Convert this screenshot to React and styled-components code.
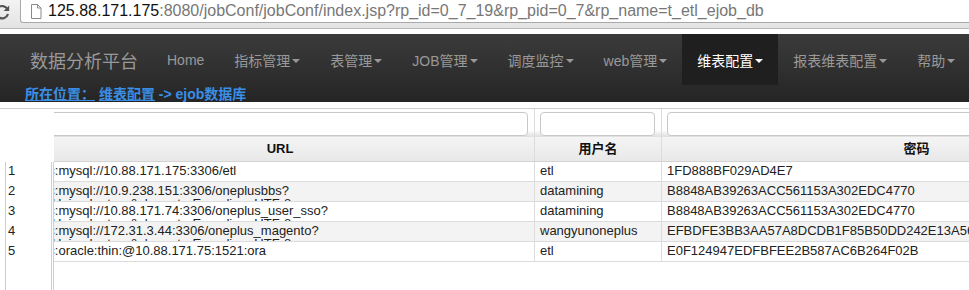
import styled, { createGlobalStyle } from "styled-components";

const GlobalStyle = createGlobalStyle`
  html, body { margin: 0; padding: 0; background: #fff; }
  body {
    font-family: "Liberation Sans", "Noto Sans CJK SC", Arial, sans-serif;
    overflow: hidden;
  }
`;

const Page = styled.div`
  width: 969px;
  height: 290px;
  overflow: hidden;
`;

/* ---------- browser chrome ---------- */

const BrowserBar = styled.div`
  height: 28px;
  background: linear-gradient(#f3f3f3, #e3e3e3);
  border-bottom: 1px solid #b9b9b9;
  display: flex;
  align-items: flex-start;
`;

const ReloadBox = styled.div`
  width: 20px;
  height: 24px;
  flex-shrink: 0;
  display: flex;
  align-items: center;
  overflow: hidden;
  svg { margin-left: -7px; }
`;

const AddressField = styled.div`
  flex: 1;
  height: 23px;
  box-sizing: border-box;
  background: #fff;
  border: 1px solid #a9a9a9;
  border-top: none;
  border-right: none;
  border-radius: 0 0 0 3px;
  display: flex;
  align-items: center;
  gap: 6px;
  padding-left: 9px;
  font-size: 16px;
  white-space: nowrap;
  overflow: hidden;
`;

const Host = styled.span`
  color: #111;
`;

const UrlRest = styled.span`
  color: #777;
`;

/* ---------- navbar ---------- */

const Navbar = styled.div`
  margin-top: 5px;
  height: 68px;
  background: linear-gradient(#3b3b3b, #252525);
  display: flex;
  flex-direction: column;
  overflow: hidden;
`;

const NavRow = styled.div`
  height: 51px;
  display: flex;
  align-items: stretch;
  padding-left: 30px;
`;

const Brand = styled.div`
  flex-shrink: 0;
  font-size: 18px;
  color: #999;
  display: flex;
  align-items: center;
  padding-right: 14px;
  white-space: nowrap;
`;

const NavItem = styled.div`
  flex-shrink: 0;
  display: flex;
  align-items: center;
  padding: 0 15px;
  font-size: 14px;
  color: ${(p) => (p.$active ? "#fff" : "#999")};
  background: ${(p) => (p.$active ? "#1f1f1f" : "transparent")};
  white-space: nowrap;
`;

const Caret = styled.span`
  display: inline-block;
  width: 0;
  height: 0;
  margin-left: 2px;
  margin-top: 2px;
  border-top: 4px solid ${(p) => (p.$active ? "#fff" : "#999")};
  border-left: 4px solid transparent;
  border-right: 4px solid transparent;
`;

const Breadcrumb = styled.div`
  height: 17px;
  padding: 1px 0 0 25px;
  box-sizing: border-box;
  font-size: 14px;
  font-weight: bold;
  line-height: 17px;
  color: #3a8ee6;
  white-space: nowrap;
`;

const CrumbLink = styled.span`
  text-decoration: underline;
`;

/* ---------- grid ---------- */

const COLS = [509, 127, 510];

const Grid = styled.div`
  margin-top: 6px;
  border-top: 1px solid #cfcfcf;
  height: 190px;
  display: flex;
`;

const LeftPane = styled.div`
  width: 52px;
  flex-shrink: 0;
  display: flex;
  flex-direction: column;
`;

const LeftSpacer = styled.div`
  height: 53px;
  flex-shrink: 0;
`;

const NumBody = styled.div`
  flex: 1;
  margin-left: 5px;
  border-left: 1px solid #cfcfcf;
  border-right: 1px solid #cfcfcf;
`;

const NumCell = styled.div`
  height: 20px;
  box-sizing: border-box;
  padding: 2px 0 0 2px;
  font-size: 13px;
  line-height: 13px;
  color: #222;
`;

const RightPane = styled.div`
  flex: 1;
  margin-left: 1px;
  display: flex;
  flex-direction: column;
  overflow: hidden;
`;

const Section = styled.div`
  overflow: hidden;
  border-left: 1px solid ${(p) => (p.$body ? "#cfcfcf" : "transparent")};
  flex: ${(p) => (p.$body ? 1 : "none")};
`;

const Track = styled.div`
  margin-left: -28px;
  width: ${COLS.reduce((a, b) => a + b, 0)}px;
`;

const FilterRow = styled.div`
  height: 28px;
  display: flex;
  background: linear-gradient(#fff 0%, #fff 75%, #dedede 100%);
`;

const FilterCell = styled.div`
  width: ${(p) => p.$w}px;
  box-sizing: border-box;
  border-right: 1px solid #dcdcdc;
  padding: 3px 6px 0 5px;
`;

const FilterInput = styled.div`
  height: 24px;
  box-sizing: border-box;
  border: 1px solid #c8c8c8;
  border-radius: 4px;
  background: #fff;
`;

const HeaderRow = styled.div`
  height: 25px;
  box-sizing: border-box;
  display: flex;
  background: linear-gradient(#f4f4f4, #e8e8e8);
  border-bottom: 1px solid #d3d3d3;
`;

const HeaderCell = styled.div`
  width: ${(p) => p.$w}px;
  box-sizing: border-box;
  border-right: 1px solid #dcdcdc;
  text-align: center;
  font-size: 13px;
  font-weight: bold;
  line-height: 24px;
  color: #111;
`;

const DataRow = styled.div`
  height: 20px;
  box-sizing: border-box;
  display: flex;
  border-bottom: 1px solid #dcdcdc;
  background: ${(p) => (p.$alt ? "#f3f3f3" : "#fff")};
`;

const DataCell = styled.div`
  width: ${(p) => p.$w}px;
  box-sizing: border-box;
  border-right: 1px solid #dcdcdc;
  padding: 2px 5px 0;
  font-size: 13px;
  line-height: 13px;
  color: #222;
  white-space: nowrap;
  overflow: hidden;
`;

const rows = [
  {
    url: ["jdbc:mysql://10.88.171.175:3306/etl"],
    user: "etl",
    pass: "1FD888BF029AD4E7",
  },
  {
    url: ["jdbc:mysql://10.9.238.151:3306/oneplusbbs?", "useUnicode=true&characterEncoding=UTF-8"],
    user: "datamining",
    pass: "B8848AB39263ACC561153A302EDC4770",
  },
  {
    url: ["jdbc:mysql://10.88.171.74:3306/oneplus_user_sso?", "useUnicode=true&characterEncoding=UTF-8"],
    user: "datamining",
    pass: "B8848AB39263ACC561153A302EDC4770",
  },
  {
    url: ["jdbc:mysql://172.31.3.44:3306/oneplus_magento?", "useUnicode=true&characterEncoding=UTF-8"],
    user: "wangyunoneplus",
    pass: "EFBDFE3BB3AA57A8DCDB1F85B50DD242E13A5607",
  },
  {
    url: ["jdbc:oracle:thin:@10.88.171.75:1521:ora"],
    user: "etl",
    pass: "E0F124947EDFBFEE2B587AC6B264F02B",
  },
];

const navItems = [
  { label: "Home" },
  { label: "指标管理", caret: true },
  { label: "表管理", caret: true },
  { label: "JOB管理", caret: true },
  { label: "调度监控", caret: true },
  { label: "web管理", caret: true },
  { label: "维表配置", caret: true, active: true },
  { label: "报表维表配置", caret: true },
  { label: "帮助", caret: true },
];

function ReloadIcon() {
  return (
    <svg width="18" height="18" viewBox="0 0 18 18">
      <path
        d="M14.5 6.2A6.2 6.2 0 1 0 15 11"
        fill="none"
        stroke="#555"
        strokeWidth="2.2"
      />
      <path d="M16.2 2.5v5.6h-5.6z" fill="#555" />
    </svg>
  );
}

function FileIcon() {
  return (
    <svg width="12" height="15" viewBox="0 0 12 15">
      <path
        d="M1.5 0.5h6l3.5 3.5v10.5h-9.5z"
        fill="#fff"
        stroke="#8a8a8a"
      />
      <path d="M7.5 0.5v3.5h3.5" fill="none" stroke="#8a8a8a" />
    </svg>
  );
}

export default function App() {
  return (
    <Page>
      <GlobalStyle />
      <BrowserBar>
        <ReloadBox>
          <ReloadIcon />
        </ReloadBox>
        <AddressField>
          <FileIcon />
          <span>
            <Host>125.88.171.175</Host>
            <UrlRest>:8080/jobConf/jobConf/index.jsp?rp_id=0_7_19&amp;rp_pid=0_7&amp;rp_name=t_etl_ejob_db</UrlRest>
          </span>
        </AddressField>
      </BrowserBar>

      <Navbar>
        <NavRow>
          <Brand>数据分析平台</Brand>
          {navItems.map((n) => (
            <NavItem key={n.label} $active={n.active}>
              {n.label}
              {n.caret && <Caret $active={n.active} />}
            </NavItem>
          ))}
        </NavRow>
        <Breadcrumb>
          <CrumbLink>所在位置：</CrumbLink> <CrumbLink>维表配置</CrumbLink> -&gt; ejob数据库
        </Breadcrumb>
      </Navbar>

      <Grid>
        <LeftPane>
          <LeftSpacer />
          <NumBody>
            {rows.map((r, i) => (
              <NumCell key={i}>{i + 1}</NumCell>
            ))}
          </NumBody>
        </LeftPane>
        <RightPane>
          <Section>
            <Track>
              <FilterRow>
                {COLS.map((w, i) => (
                  <FilterCell key={i} $w={w}>
                    <FilterInput />
                  </FilterCell>
                ))}
              </FilterRow>
              <HeaderRow>
                <HeaderCell $w={COLS[0]}>URL</HeaderCell>
                <HeaderCell $w={COLS[1]}>用户名</HeaderCell>
                <HeaderCell $w={COLS[2]}>密码</HeaderCell>
              </HeaderRow>
            </Track>
          </Section>
          <Section $body>
            <Track>
              {rows.map((r, i) => (
                <DataRow key={i} $alt={i % 2 === 1}>
                  <DataCell $w={COLS[0]}>
                    {r.url[0]}
                    {r.url[1] && (
                      <>
                        <br />
                        {r.url[1]}
                      </>
                    )}
                  </DataCell>
                  <DataCell $w={COLS[1]}>{r.user}</DataCell>
                  <DataCell $w={COLS[2]}>{r.pass}</DataCell>
                </DataRow>
              ))}
            </Track>
          </Section>
        </RightPane>
      </Grid>
    </Page>
  );
}
